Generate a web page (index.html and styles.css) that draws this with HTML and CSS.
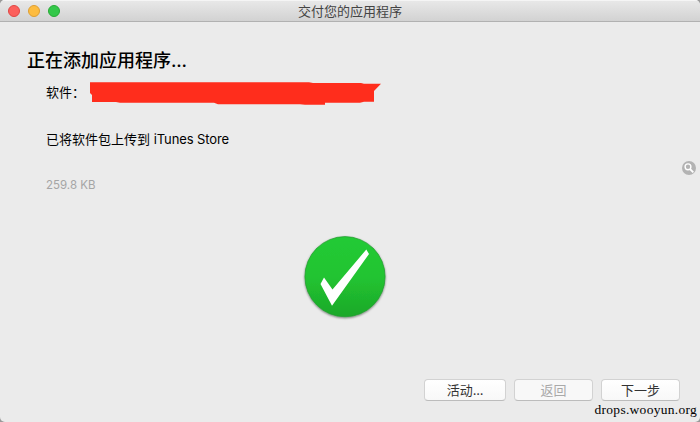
FILE: index.html
```html
<!DOCTYPE html>
<html lang="zh-CN">
<head>
<meta charset="utf-8">
<title>交付您的应用程序</title>
<link rel="stylesheet" href="styles.css">
</head>
<body>
<main class="window">
  <header class="titlebar">
    <div class="lights"><i class="light red"></i><i class="light yellow"></i><i class="light green"></i></div>
    <div class="title">交付您的应用程序</div>
  </header>
  <section class="content">
    <h1>正在添加应用程序<span class="dots">...</span></h1>
    <div class="software">
      <span>软件：</span>
      <svg class="redaction" width="292" height="24" viewBox="0 0 292 24"><path fill="#ff2d1c" d="M0 .3H219L223 1H271L274 1.8H291L284 9V19.8H274L270 20.7H235V22.8H215L210 22.2H128L124 20.7H30L26 20H2V13L0 11Z"/></svg>
    </div>
    <p class="status">已将软件包上传到 <span class="latin">iTunes Store</span></p>
    <p class="size">259.8 KB</p>
    <svg class="done" width="92" height="94" viewBox="0 0 92 94">
      <defs>
        <linearGradient id="disc" x1="0" y1="0" x2="0" y2="1"><stop offset="0" stop-color="#23ca35"/><stop offset=".5" stop-color="#22c431"/><stop offset="1" stop-color="#1ca829"/></linearGradient>
        <filter id="shade" x="-10%" y="-10%" width="120%" height="120%"><feDropShadow dx="0" dy="1" stdDeviation="1.2" flood-color="#000" flood-opacity=".5"/></filter>
      </defs>
      <circle cx="46" cy="46.7" r="40.1" fill="url(#disc)" stroke="#239b2f" stroke-width=".7" filter="url(#shade)"/>
      <path fill="#fff" d="M25 47.5L33.5 59.5L67.3 19.5L70 24L33 75.8L21.5 54Z"/>
    </svg>
  </section>
  <footer class="actions">
    <button class="wide">活动<span class="dots">...</span></button><button disabled>返回</button><button>下一步</button>
  </footer>
  <svg class="search" width="14" height="14" viewBox="0 0 14 14"><circle cx="7" cy="7" r="7" fill="#b3b3b3"/><circle cx="6" cy="5.8" r="2.9" fill="none" stroke="#fff" stroke-width="1.4"/><path d="M8 8L11.3 11.3" stroke="#fff" stroke-width="1.8"/></svg>
  <div class="watermark">drops.wooyun.org</div>
</main>
</body>
</html>
```
FILE: styles.css
```css
* { box-sizing: border-box; }
body {
  margin: 0;
  background: #999;
  font: 13px/20px Inter, "Noto Sans CJK SC", sans-serif;
  color: #000;
}
.window {
  position: relative;
  display: flex;
  flex-direction: column;
  width: 700px;
  height: 422px;
  background: #ebebeb;
  border-radius: 5px;
  overflow: hidden;
}
.titlebar {
  display: grid;
  grid-template-columns: 60px 1fr 60px;
  height: 22px;
  background: linear-gradient(#e9e9e9, #d2d2d2);
  border-bottom: 1px solid #b1b1b1;
  box-shadow: inset 0 1px #f5f5f5;
}
.lights { display: flex; gap: 8px; padding: 5px 0 0 8px; }
.light { width: 12px; height: 12px; border-radius: 50%; border: 1px solid; }
.red { background: #fc605c; border-color: #df4744; }
.yellow { background: #fdbc40; border-color: #dd9e33; }
.green { background: #34c84a; border-color: #27aa35; }
.title { text-align: center; line-height: 22px; color: #444; }
.content { display: flex; flex-direction: column; height: 357px; }
h1 {
  margin: 26px 0 0 27px;
  font-size: 18px;
  line-height: 26px;
  font-weight: 500;
}
.dots { letter-spacing: -0.2px; }
.software { display: flex; align-items: flex-start; height: 24px; margin: 8px 0 0 46px; }
.software span { width: 44px; white-space: nowrap; }
.status, .size { margin: 0 0 0 46px; }
.status { margin-top: 23px; }
.latin { letter-spacing: -0.1px; }
.size { margin-top: 26px; color: #a5a5a5; font-size: 11.5px; }
.done { margin: 35px 0 0 299px; flex: none; }
.actions { display: flex; justify-content: flex-end; gap: 8px; padding-right: 20px; }
button {
  width: 79px;
  height: 22px;
  padding: 0;
  border: 1px solid #d2d2d2;
  border-bottom-color: #bcbcbc;
  border-radius: 4px;
  background: linear-gradient(#fff, #f8f8f8);
  font: inherit;
  line-height: 20px;
  color: #333;
}
.wide { width: 82px; }
button:disabled { color: #a9a9a9; background: #f8f8f8; }
.search { position: absolute; left: 682px; top: 161px; }
.watermark {
  position: absolute;
  right: 3px;
  bottom: 3px;
  font: 13.5px/18px "Liberation Serif", serif;
  letter-spacing: 0.28px;
}
```
